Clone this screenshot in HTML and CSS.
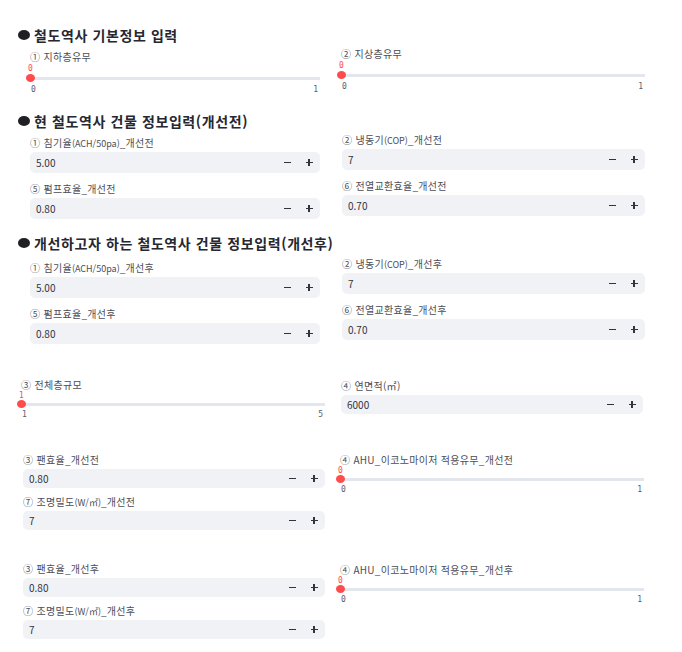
FILE: index.html
```html
<!DOCTYPE html>
<html lang="ko">
<head>
    <meta charset="UTF-8">
    <meta name="viewport" content="width=device-width, initial-scale=1.0">
    <title>철도역사 정보입력</title>
    <link rel="stylesheet" href="styles.css">
</head>
<body>
    <div class="page">
        <!-- 기본정보 -->
        <h2 class="heading"><span class="dot"></span>철도역사 기본정보 입력</h2>
        <div class="row row-a gap-2">
            <div class="col shift-3">
                <div class="slider loose">
                    <div class="label">① 지하층유무</div>
                    <div class="slider-value">0</div>
                    <div class="track"><span class="thumb"></span></div>
                    <div class="ticks"><span>0</span><span>1</span></div>
                </div>
            </div>
            <div class="col">
                <div class="slider loose">
                    <div class="label">② 지상층유무</div>
                    <div class="slider-value">0</div>
                    <div class="track"><span class="thumb"></span></div>
                    <div class="ticks"><span>0</span><span>1</span></div>
                </div>
            </div>
        </div>

        <!-- 개선전 -->
        <h2 class="heading gap-16"><span class="dot"></span>현 철도역사 건물 정보입력(개선전)</h2>
        <div class="row row-b gap-2">
            <div class="col shift-3">
                <div class="field">
                    <div class="label">① 침기율<small>(ACH/50pa)</small>_개선전</div>
                    <div class="num"><span class="val">5.00</span><span class="step minus"></span><span class="step plus"></span></div>
                </div>
                <div class="field">
                    <div class="label">⑤ 펌프효율_개선전</div>
                    <div class="num"><span class="val">0.80</span><span class="step minus"></span><span class="step plus"></span></div>
                </div>
            </div>
            <div class="col">
                <div class="field">
                    <div class="label">② 냉동기<small>(COP)</small>_개선전</div>
                    <div class="num"><span class="val">7</span><span class="step minus"></span><span class="step plus"></span></div>
                </div>
                <div class="field">
                    <div class="label">⑥ 전열교환효율_개선전</div>
                    <div class="num"><span class="val">0.70</span><span class="step minus"></span><span class="step plus"></span></div>
                </div>
            </div>
        </div>

        <!-- 개선후 -->
        <h2 class="heading gap-14"><span class="dot"></span>개선하고자 하는 철도역사 건물 정보입력(개선후)</h2>
        <div class="row row-b gap-4">
            <div class="col shift-4">
                <div class="field">
                    <div class="label">① 침기율<small>(ACH/50pa)</small>_개선후</div>
                    <div class="num"><span class="val">5.00</span><span class="step minus"></span><span class="step plus"></span></div>
                </div>
                <div class="field">
                    <div class="label">⑤ 펌프효율_개선후</div>
                    <div class="num"><span class="val">0.80</span><span class="step minus"></span><span class="step plus"></span></div>
                </div>
            </div>
            <div class="col">
                <div class="field">
                    <div class="label">② 냉동기<small>(COP)</small>_개선후</div>
                    <div class="num"><span class="val">7</span><span class="step minus"></span><span class="step plus"></span></div>
                </div>
                <div class="field">
                    <div class="label">⑥ 전열교환효율_개선후</div>
                    <div class="num"><span class="val">0.70</span><span class="step minus"></span><span class="step plus"></span></div>
                </div>
            </div>
        </div>

        <!-- 규모 -->
        <div class="row row-c gap-34">
            <div class="col">
                <div class="slider">
                    <div class="label">③ 전체층규모</div>
                    <div class="slider-value">1</div>
                    <div class="track"><span class="thumb"></span></div>
                    <div class="ticks"><span>1</span><span>5</span></div>
                </div>
            </div>
            <div class="col shift-1">
                <div class="field">
                    <div class="label">④ 연면적(㎡)</div>
                    <div class="num sm"><span class="val">6000</span><span class="step minus"></span><span class="step plus"></span></div>
                </div>
            </div>
        </div>

        <!-- 공조/조명 개선전 -->
        <div class="row row-d gap-33">
            <div class="col small-gap">
                <div class="field">
                    <div class="label">③ 팬효율_개선전</div>
                    <div class="num sm"><span class="val">0.80</span><span class="step minus"></span><span class="step plus"></span></div>
                </div>
                <div class="field">
                    <div class="label">⑦ 조명밀도<small>(W/㎡)</small>_개선전</div>
                    <div class="num sm"><span class="val">7</span><span class="step minus"></span><span class="step plus"></span></div>
                </div>
            </div>
            <div class="col">
                <div class="slider">
                    <div class="label">④ AHU_이코노마이저 적용유무_개선전</div>
                    <div class="slider-value">0</div>
                    <div class="track"><span class="thumb"></span></div>
                    <div class="ticks"><span>0</span><span>1</span></div>
                </div>
            </div>
        </div>

        <!-- 공조/조명 개선후 -->
        <div class="row row-d gap-32">
            <div class="col small-gap">
                <div class="field">
                    <div class="label">③ 팬효율_개선후</div>
                    <div class="num sm"><span class="val">0.80</span><span class="step minus"></span><span class="step plus"></span></div>
                </div>
                <div class="field">
                    <div class="label">⑦ 조명밀도<small>(W/㎡)</small>_개선후</div>
                    <div class="num sm"><span class="val">7</span><span class="step minus"></span><span class="step plus"></span></div>
                </div>
            </div>
            <div class="col shift-1">
                <div class="slider">
                    <div class="label">④ AHU_이코노마이저 적용유무_개선후</div>
                    <div class="slider-value">0</div>
                    <div class="track"><span class="thumb"></span></div>
                    <div class="ticks"><span>0</span><span>1</span></div>
                </div>
            </div>
        </div>
    </div>
</body>
</html>
```

FILE: styles.css
```css
/* Page */
body {
    margin: 0;
    background: #ffffff;
    color: #31333f;
    font-family: "Noto Sans CJK KR", "Noto Sans", sans-serif;
}
.page {
    padding-top: 25px;
}

/* Section headings */
.heading {
    display: flex;
    align-items: center;
    margin: 0;
    padding-left: 18px;
    height: 20px;
    font-size: 14px;
    font-weight: 700;
    line-height: 20px;
    letter-spacing: 0.6px;
    color: #262730;
}
.dot {
    width: 12px;
    height: 10px;
    border-radius: 50%;
    background: #1f1f24;
    margin-right: 4px;
    flex: none;
}

/* Vertical spacing between blocks */
.gap-2 { margin-top: 2px; }
.gap-4 { margin-top: 4px; }
.gap-14 { margin-top: 14px; }
.gap-16 { margin-top: 16px; }
.gap-32 { margin-top: 32px; }
.gap-33 { margin-top: 33px; }
.gap-34 { margin-top: 34px; }

/* Two column rows */
.row {
    display: grid;
    align-items: start;
}
.row-a {
    padding-left: 30px;
    grid-template-columns: 290px 304px;
    column-gap: 21px;
}
.row-b {
    padding-left: 30px;
    grid-template-columns: 290px 303px;
    column-gap: 22px;
}
.row-c {
    padding-left: 21px;
    grid-template-columns: 304px 302px;
    column-gap: 16px;
}
.row-d {
    padding-left: 23px;
    grid-template-columns: 302px 304px;
    column-gap: 15px;
}
.shift-1 { padding-top: 1px; }
.shift-3 { padding-top: 3px; }
.shift-4 { padding-top: 4px; }

/* Widget labels */
.label {
    font-size: 10px;
    line-height: 14px;
    height: 14px;
    letter-spacing: 0.3px;
    color: #4b4d58;
    white-space: nowrap;
}
.label small {
    font-size: 9px;
    letter-spacing: 0;
}

/* Number inputs */
.field + .field {
    margin-top: 9px;
}
.small-gap .field + .field {
    margin-top: 7px;
}
.num {
    margin-top: 2px;
    display: flex;
    align-items: center;
    height: 21px;
    padding-left: 6px;
    background: #f0f2f6;
    border-radius: 5px;
    font-size: 10px;
    color: #31333f;
}
.num.sm {
    height: 19px;
}
.val {
    flex: 1;
}
.step {
    width: 22px;
    height: 100%;
    position: relative;
}
.step::before,
.step.plus::after {
    content: "";
    position: absolute;
    left: 50%;
    top: 50%;
    width: 7px;
    height: 1.6px;
    margin: -0.8px 0 0 -3.5px;
    background: #31333f;
}
.step.plus::after {
    width: 1.6px;
    height: 7px;
    margin: -3.5px 0 0 -0.8px;
}

/* Sliders */
.slider-value {
    height: 8px;
    line-height: 8px;
    margin-left: -2px;
    font-family: "DejaVu Sans Mono", monospace;
    font-size: 8px;
    color: #ff4b4b;
}
.track {
    display: flex;
    align-items: center;
    height: 8px;
    background: linear-gradient(#e3e6ec, #e3e6ec) center / 100% 3px no-repeat;
}
.thumb {
    width: 9px;
    height: 8px;
    margin-left: -4px;
    border-radius: 50%;
    background: #ff4b4b;
}
.ticks {
    display: flex;
    justify-content: space-between;
    margin-top: 2px;
    padding: 0 2px 0 1px;
    height: 10px;
    line-height: 10px;
    font-family: "DejaVu Sans Mono", monospace;
    font-size: 8px;
    color: #5a5c66;
}
.slider.loose .slider-value {
    height: 9px;
    line-height: 9px;
}
.slider.loose .track {
    height: 10px;
}
```
